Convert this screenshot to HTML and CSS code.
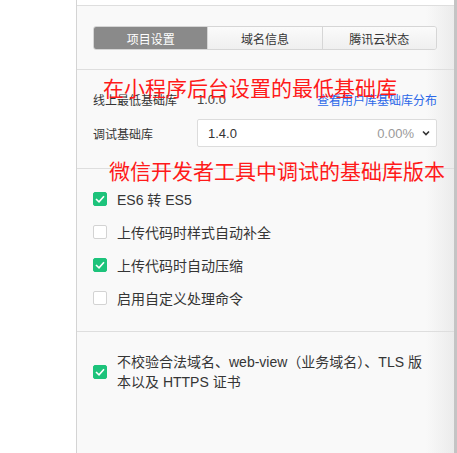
FILE: index.html
```html
<!DOCTYPE html>
<html lang="zh">
<head>
<meta charset="utf-8">
<link rel="stylesheet" href="styles.css">
</head>
<body>
<div class="page">
  <div class="gutter"></div>
  <div class="panel">
    <div class="topbar"></div>
    <div class="section tabs-section">
      <div class="tabs">
        <div class="tab active">项目设置</div>
        <div class="tab">域名信息</div>
        <div class="tab">腾讯云状态</div>
      </div>
    </div>
    <div class="section lib-section">
      <div class="row">
        <span class="label">线上最低基础库</span>
        <span class="value">1.0.0</span>
        <a class="link">查看用户库基础库分布</a>
      </div>
      <div class="row">
        <span class="label">调试基础库</span>
        <div class="select">
          <span class="sel-value">1.4.0</span>
          <span class="sel-pct">0.00%</span>
          <svg class="chev" width="8" height="6" viewBox="0 0 8 6"><path d="M1 1.5 L4 4.5 L7 1.5" fill="none" stroke="#333" stroke-width="1.6"/></svg>
        </div>
      </div>
      <div class="note note1">在小程序后台设置的最低基础库</div>
    </div>
    <div class="section checks-section">
      <div class="note note2">微信开发者工具中调试的基础库版本</div>
      <label class="check"><span class="box on"><svg width="10" height="8" viewBox="0 0 10 8"><path d="M1 4 L4 6.8 L9 1.2" fill="none" stroke="#fff" stroke-width="1.6"/></svg></span><span>ES6 转 ES5</span></label>
      <label class="check"><span class="box"></span><span>上传代码时样式自动补全</span></label>
      <label class="check"><span class="box on"><svg width="10" height="8" viewBox="0 0 10 8"><path d="M1 4 L4 6.8 L9 1.2" fill="none" stroke="#fff" stroke-width="1.6"/></svg></span><span>上传代码时自动压缩</span></label>
      <label class="check"><span class="box"></span><span>启用自定义处理命令</span></label>
    </div>
    <div class="section last-section">
      <label class="check multi"><span class="box on"><svg width="10" height="8" viewBox="0 0 10 8"><path d="M1 4 L4 6.8 L9 1.2" fill="none" stroke="#fff" stroke-width="1.6"/></svg></span><span class="multi-text">不校验合法域名、web-view（业务域名）、TLS 版本以及 HTTPS 证书</span></label>
    </div>
  </div>
  <div class="scrollbar"></div>
</div>
</body>
</html>
```
FILE: styles.css
```css
* { box-sizing: border-box; }
html, body { margin: 0; padding: 0; background: #fff; }
body {
  font-family: "Liberation Sans", "Noto Sans CJK SC", sans-serif;
  color: #353535;
}
.page {
  display: flex;
  height: 453px;
  overflow: hidden;
}
.gutter { width: 76px; flex: none; background: #fff; }
.panel {
  flex: 1;
  border-left: 1px solid #d4d4d4;
  background: linear-gradient(to right, #f9f9f9 calc(100% - 28px), #ebebeb);
  position: relative;
}
.scrollbar { width: 3px; flex: none; background: #c4c4c4; }
.topbar {
  height: 6px;
  background: #fff;
  border-bottom: 1px solid #dedede;
}
.section { position: relative; border-bottom: 1px solid #dedede; }
.tabs-section { padding: 20px 17px 19px 16px; }
.tabs {
  display: flex;
  height: 24px;
  border: 1px solid #d6d6d6;
  border-radius: 3px;
  overflow: hidden;
}
.tab {
  flex: 1;
  display: flex;
  align-items: center;
  justify-content: center;
  font-size: 12px;
  font-family: "Noto Sans CJK SC", sans-serif;
  color: #353535;
  background: linear-gradient(#fbfbfb, #efefef);
  border-left: 1px solid #d6d6d6;
}
.tab:first-child { border-left: none; }
.tab.active { background: #8a8a8a; color: #fff; }

.lib-section { padding: 19px 17px 21px 16px; display: flex; flex-direction: column; gap: 10px; }
.row { display: flex; align-items: center; font-size: 12px; }
.row:first-child { height: 20px; }
.label { width: 104px; flex: none; font-family: "Noto Sans CJK SC", sans-serif; }
.value { color: #444; font-size: 13px; flex: 1; }
.link { color: #2b67e8; font-size: 12px; font-family: "Noto Sans CJK SC", sans-serif; }
.select {
  flex: 1;
  height: 28px;
  background: #fff;
  border: 1px solid #dcdcdc;
  border-radius: 2px;
  display: flex;
  align-items: center;
  padding: 0 6px 0 10px;
  font-size: 13px;
}
.sel-value { flex: 1; color: #333; }
.sel-pct { color: #9a9a9a; margin-right: 8px; }
.chev { display: block; }

.note {
  position: absolute;
  color: #ff1a1a;
  font-family: "Noto Sans CJK SC", sans-serif;
  font-size: 21px;
  line-height: 22px;
  white-space: nowrap;
  letter-spacing: 0;
}
.note1 { left: 26px; top: 6px; }
.note2 { left: 32px; top: -10px; }

.checks-section { padding: 20px 17px 23px 16px; display: flex; flex-direction: column; gap: 13px; }
.check {
  display: flex;
  align-items: center;
  height: 20px;
  font-size: 14px;
  font-family: "Liberation Sans", "Noto Sans CJK SC", sans-serif;
}
.box {
  width: 14px;
  height: 14px;
  flex: none;
  border: 1px solid #d3d3d3;
  border-radius: 2px;
  background: #fff;
  margin-right: 10px;
  display: flex;
  align-items: center;
  justify-content: center;
}
.box.on { background: #1dc37b; border-color: #1dc37b; }
.box svg { display: block; }

.last-section { border-bottom: none; padding: 20px 17px 0 16px; height: 130px; }
.check.multi { height: auto; }
.multi-text { width: 312px; line-height: 20px; }
```
